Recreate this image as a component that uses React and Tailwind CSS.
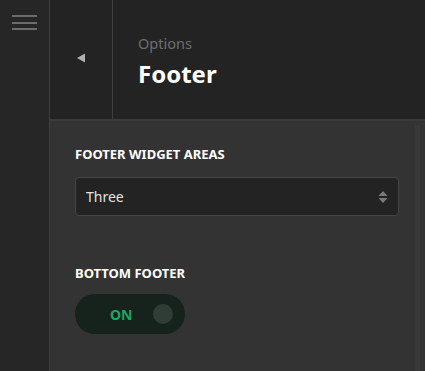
export default function App() {
  return (
    <div className="flex h-[371px] w-[425px] overflow-hidden bg-[#333333] font-['Noto_Sans',sans-serif]">
      {/* Sidebar */}
      <aside className="w-[50px] shrink-0 bg-[#262626] border-r border-[#3e3e3e] pt-[15px] pl-[12px]">
        <div className="flex flex-col gap-[4.5px] w-[25px]">
          <span className="h-[2px] bg-[#6c6c6c]" />
          <span className="h-[2px] bg-[#6c6c6c]" />
          <span className="h-[2px] bg-[#6c6c6c]" />
        </div>
      </aside>

      <main className="flex-1 flex flex-col">
        {/* Header */}
        <header className="h-[121px] shrink-0 flex bg-[#232323] border-b-2 border-[#3a3a3a]">
          <div className="w-[63px] border-r border-[#3e3e3e] flex items-center justify-center pb-[3px]">
            <svg width="9" height="10" viewBox="0 0 9 10">
              <path d="M0 5 L8 0.5 L8 9.5 Z" fill="#b0b0b0" />
            </svg>
          </div>
          <div className="pl-[25px] pt-[33px]">
            <p className="text-[14.5px] leading-[20px] text-[#6e6e6e]">Options</p>
            <h1 className="text-[24px] leading-[32px] mt-[5px] font-bold text-white">Footer</h1>
          </div>
        </header>

        {/* Content */}
        <section className="flex-1 flex">
          <div className="flex-1 pl-[25px] pr-[16px] pt-[24px]">
            <p className="text-[13px] leading-[18px] font-bold text-white">FOOTER WIDGET AREAS</p>
            <div className="mt-[14px] h-[39px] flex items-center justify-between rounded-[4px] border border-[#454545] bg-[#232323] pl-[10px] pr-[10px]">
              <span className="text-[14px] text-[#e4e4e4]">Three</span>
              <svg width="10" height="14" viewBox="0 0 10 14">
                <path d="M5 1 L9.5 6 L0.5 6 Z" fill="#7a7a7a" />
                <path d="M5 13 L9.5 8 L0.5 8 Z" fill="#7a7a7a" />
              </svg>
            </div>

            <p className="mt-[48px] text-[13px] leading-[18px] font-bold text-white">BOTTOM FOOTER</p>
            <div className="mt-[12px] w-[110px] h-[40px] rounded-full bg-[#16221c] flex items-center pl-[35px] pr-[12px] justify-between">
              <span className="text-[14px] font-bold text-[#1ea463]">ON</span>
              <span className="w-[20px] h-[20px] rounded-full bg-[#2f3d36]" />
            </div>
          </div>
          <div className="w-[10px] shrink-0 pt-[4px] flex">
            <div className="w-[5px] bg-[#393939]" />
          </div>
        </section>
      </main>
    </div>
  )
}
